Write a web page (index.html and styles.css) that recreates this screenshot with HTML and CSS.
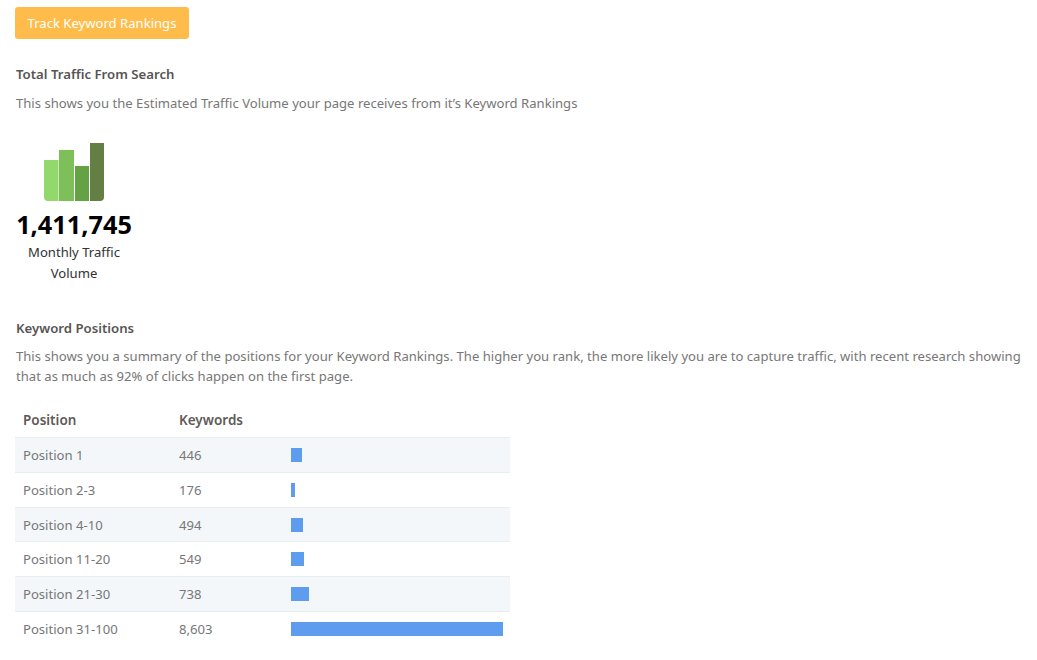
FILE: index.html
```html
<!DOCTYPE html>
<html>
<head>
  <title>Traffic</title>
  <link rel="stylesheet" href="styles.css">
</head>
<body>

<button class="track">Track Keyword Rankings</button>

<h4 class="traffic-title">Total Traffic From Search</h4>
<p class="note">This shows you the Estimated Traffic Volume your page receives from it’s Keyword Rankings</p>

<div class="stat">
  <svg class="stat-icon" width="60" height="58" viewBox="0 0 60 58">
    <path d="M0 17H14.5V58H4A4 4 0 0 1 0 54Z" fill="#93d86d"/>
    <rect x="15" y="7" width="15" height="51" fill="#7dc05a"/>
    <rect x="31" y="23" width="14" height="35" fill="#65a244"/>
    <path d="M46 0H60V54A4 4 0 0 1 56 58H46Z" fill="#647f43"/>
  </svg>
  <div class="stat-num">1,411,745</div>
  <div class="stat-label">Monthly Traffic Volume</div>
</div>

<h4 class="positions-title">Keyword Positions</h4>
<p class="note note-tight">This shows you a summary of the positions for your Keyword Rankings. The higher you rank, the more likely you are to capture traffic, with recent research showing that as much as 92% of clicks happen on the first page.</p>

<table class="positions">
  <thead><tr><th class="col-pos">Position</th><th class="col-kw">Keywords</th><th></th></tr></thead>
  <tbody>
    <tr><td>Position 1</td><td>446</td><td><div class="bar" style="width:11px"></div></td></tr>
    <tr><td>Position 2-3</td><td>176</td><td><div class="bar" style="width:4px"></div></td></tr>
    <tr><td>Position 4-10</td><td>494</td><td><div class="bar" style="width:12px"></div></td></tr>
    <tr><td>Position 11-20</td><td>549</td><td><div class="bar" style="width:13px"></div></td></tr>
    <tr><td>Position 21-30</td><td>738</td><td><div class="bar" style="width:18px"></div></td></tr>
    <tr><td>Position 31-100</td><td>8,603</td><td><div class="bar" style="width:212px"></div></td></tr>
  </tbody>
</table>

</body>
</html>
```

FILE: styles.css
```css
body {
  margin: 0;
  padding: 7px 15px 0 16px;
  font-family: "Noto Sans", sans-serif;
  font-size: 13.1px;
  color: #777;
  background: #fff;
}
.track {
  display: block;
  margin-left: -1px;
  width: 174px;
  height: 32px;
  padding: 0;
  border: 0;
  border-radius: 3px;
  background: #ffbc4a;
  color: #fff;
  font-family: inherit;
  font-size: 13.1px;
}
h4 {
  margin: 0;
  font-size: 13.2px;
  line-height: 20px;
  font-weight: 600;
  color: #555;
}
.traffic-title {
  margin-top: 25px;
}
.positions-title {
  margin-top: 34px;
}
.note {
  margin: 9px 0 0;
  line-height: 20px;
}
.note-tight {
  margin-top: 8px;
}
.stat {
  width: 116px;
  margin-top: 30px;
  text-align: center;
  color: #333;
}
.stat-icon {
  display: block;
  margin: 0 auto;
}
.stat-num {
  margin-top: 5px;
  font-size: 25.3px;
  line-height: 36px;
  font-weight: 700;
  color: #000;
}
.stat-label {
  width: 100px;
  margin: 0 auto;
  line-height: 21px;
}
.positions {
  table-layout: fixed;
  width: 495px;
  margin: 16px 0 0 -1px;
  border-collapse: collapse;
}
.positions th {
  height: 35.4px;
  padding: 0 8px;
  text-align: left;
  font-size: 13.5px;
  font-weight: 600;
  color: #605a58;
}
.positions td {
  height: 33.7px;
  padding: 0 8px;
  border-top: 1px solid #e9eef2;
}
.positions tbody tr:nth-child(odd) {
  background: #f4f7fa;
}
.col-pos {
  width: 140px;
}
.col-kw {
  width: 96px;
}
.bar {
  height: 14px;
  background: #5d9cef;
}
```
